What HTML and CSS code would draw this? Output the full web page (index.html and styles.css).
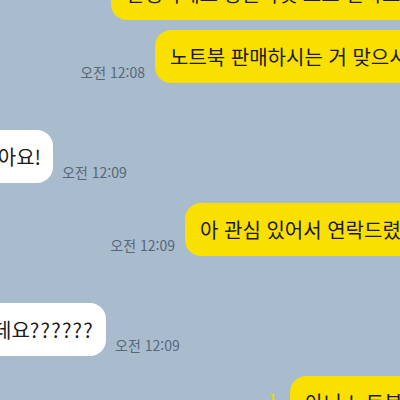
FILE: index.html
```html
<!DOCTYPE html>
<html lang="ko">
<head>
  <meta charset="UTF-8" />
  <meta name="viewport" content="width=device-width, initial-scale=1.0" />
  <title>채팅</title>
  <link rel="stylesheet" href="styles.css">
</head>
<body>

  <!-- Chat room -->
  <div class="chat">

    <div class="row me first">
      <div class="meta w-101"></div>
      <div class="bubble yellow">안녕하세요 당근마켓 보고 연락드려요</div>
    </div>

    <div class="row me gap-10">
      <div class="meta w-145"><span class="time">오전 12:08</span></div>
      <div class="bubble yellow">노트북 판매하시는 거 맞으시죠?</div>
    </div>

    <div class="row you gap-47">
      <div class="holder w-53">
        <div class="bubble white">네 맞아요!</div>
      </div>
      <span class="time">오전 12:09</span>
    </div>

    <div class="row me gap-20">
      <div class="meta w-175"><span class="time">오전 12:09</span></div>
      <div class="bubble yellow">아 관심 있어서 연락드렸어요</div>
    </div>

    <div class="row you gap-47">
      <div class="holder w-106">
        <div class="bubble white">어디서 보셨는데요<span class="marks">??????</span></div>
      </div>
      <span class="time">오전 12:09</span>
    </div>

    <div class="row me gap-20">
      <div class="meta w-280"><span class="unread">1</span></div>
      <div class="bubble yellow">아니 노트북 보고요</div>
    </div>

  </div>

</body>
</html>
```

FILE: styles.css
```css
* {
  margin: 0;
  padding: 0;
  box-sizing: border-box;
}

body {
  width: 400px;
  height: 400px;
  overflow: hidden;
  background: #a9bccd;
  font-family: "Noto Sans CJK KR", "Noto Sans", sans-serif;
}

.chat {
  display: flex;
  flex-direction: column;
}

.row {
  display: flex;
  align-items: flex-end;
  gap: 10px;
}

.row.you {
  gap: 9px;
}

.first { margin-top: -33px; }
.gap-10 { margin-top: 10px; }
.gap-20 { margin-top: 20px; }
.gap-47 { margin-top: 47px; }

/* fixed column widths so the crop lines up */
.w-53 { width: 53px; }
.w-101 { width: 101px; }
.w-106 { width: 106px; }
.w-145 { width: 145px; }
.w-175 { width: 175px; }
.w-280 { width: 280px; }

.meta {
  flex-shrink: 0;
  display: flex;
  justify-content: flex-end;
  align-items: flex-end;
}

.holder {
  flex-shrink: 0;
  display: flex;
  justify-content: flex-end;
}

.bubble {
  flex-shrink: 0;
  white-space: nowrap;
  padding: 15px 15px;
  border-radius: 16px;
  font-size: 20px;
  line-height: 23px;
  color: #1a1a1a;
}

.yellow {
  background: #f9e000;
}

.white {
  background: #ffffff;
  padding-right: 12px;
}

.marks {
  letter-spacing: 1.2px;
}

.time {
  white-space: nowrap;
  font-size: 14px;
  line-height: 16px;
  color: #56677a;
  margin-bottom: 3px;
}

.unread {
  font-size: 12px;
  line-height: 14px;
  color: #e8d600;
  font-weight: bold;
  margin-bottom: 24px;
  margin-right: 4px;
}
```
